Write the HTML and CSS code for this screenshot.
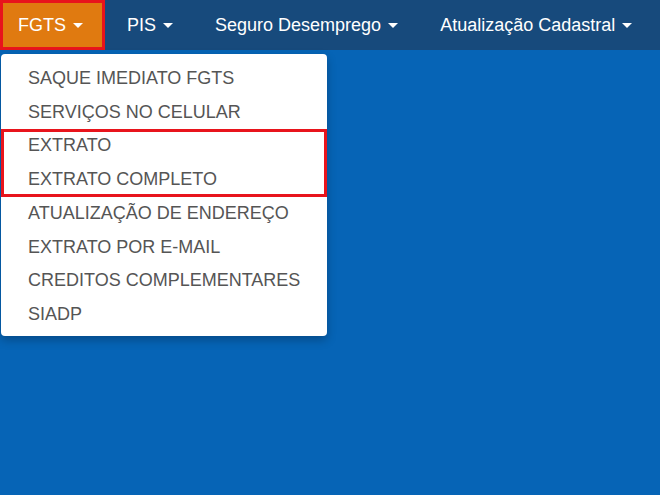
FILE: index.html
```html
<!DOCTYPE html>
<html lang="pt-BR">
<head>
    <meta charset="UTF-8">
    <title>FGTS</title>
    <link rel="stylesheet" href="styles.css">
</head>
<body>
    <nav class="topbar">
        <ul class="menu">
            <li class="menu-item active">FGTS <span class="caret"></span></li>
            <li class="menu-item">PIS <span class="caret"></span></li>
            <li class="menu-item">Seguro Desemprego <span class="caret"></span></li>
            <li class="menu-item">Atualização Cadastral <span class="caret"></span></li>
        </ul>

        <ul class="dropdown">
            <li class="dropdown-item">SAQUE IMEDIATO FGTS</li>
            <li class="dropdown-item">SERVIÇOS NO CELULAR</li>
            <li class="highlight">
                <ul class="group">
                    <li class="dropdown-item">EXTRATO</li>
                    <li class="dropdown-item">EXTRATO COMPLETO</li>
                </ul>
            </li>
            <li class="dropdown-item">ATUALIZAÇÃO DE ENDEREÇO</li>
            <li class="dropdown-item">EXTRATO POR E-MAIL</li>
            <li class="dropdown-item">CREDITOS COMPLEMENTARES</li>
            <li class="dropdown-item">SIADP</li>
        </ul>
    </nav>
</body>
</html>
```

FILE: styles.css
```css
body {
    margin: 0;
    font-family: "Liberation Sans", Arial, sans-serif;
    background-color: #0664b6;
    min-height: 100vh;
}

ul {
    list-style: none;
    margin: 0;
    padding: 0;
}

.topbar {
    position: relative;
    background-color: #174a7c;
    height: 50px;
}

.menu {
    display: flex;
    height: 100%;
}

.menu-item {
    display: flex;
    align-items: center;
    padding: 0 20px 0 18px;
    color: #fff;
    font-size: 18px;
    white-space: pre;
}

.menu-item + .menu-item {
    padding-left: 22px;
}

.menu-item.active {
    background-color: #e07a10;
    border: 3px solid #e8141c; /* marcado en rojo */
    padding-left: 15px;
    padding-right: 19px;
}

.caret {
    display: inline-block;
    width: 0;
    height: 0;
    margin-left: 2px;
    border-left: 5px solid transparent;
    border-right: 5px solid transparent;
    border-top: 5px solid #fff;
}

/* menú desplegable */
.dropdown {
    position: absolute;
    top: 54px;
    left: 1px;
    width: 326px;
    padding: 8px 0 4px;
    background-color: #fff;
    border-radius: 4px;
    box-shadow: 0 4px 10px rgba(0, 0, 0, 0.25);
    box-sizing: border-box;
}

.dropdown-item {
    padding-left: 27px;
    line-height: 33.7px;
    font-size: 18px;
    color: #555;
}

.highlight {
    outline: 3px solid #e8141c;
    outline-offset: -3px;
}
```
